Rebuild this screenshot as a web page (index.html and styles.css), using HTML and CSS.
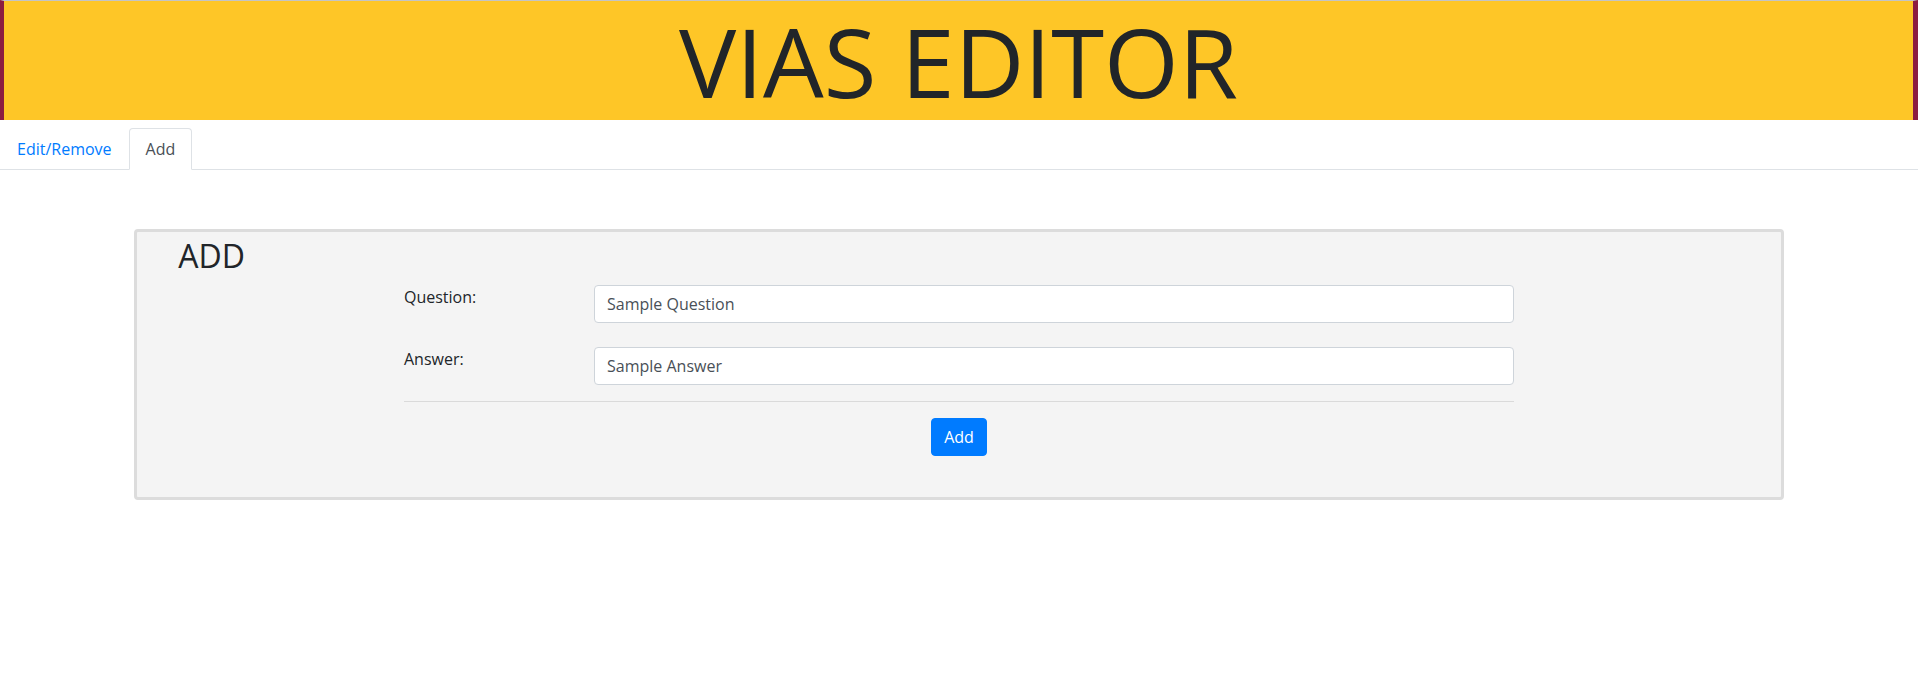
FILE: index.html
```html
<!DOCTYPE html>
<html lang="en">
<head>
<meta charset="utf-8">
<title>VIAS Editor</title>
<link rel="stylesheet" href="styles.css">
</head>
<body>
<header class="banner">
  <h1 class="banner-title">VIAS EDITOR</h1>
</header>
<nav class="tabs">
  <a class="tab" href="#">Edit/Remove</a>
  <a class="tab tab-active" href="#">Add</a>
</nav>
<main class="panel">
  <h2 class="panel-title">ADD</h2>
  <form class="form-wrap">
    <div class="fields">
      <div class="field">
        <label class="field-label">Question:</label>
        <div class="field-control"><input class="input" type="text" value="Sample Question"></div>
      </div>
      <div class="field">
        <label class="field-label">Answer:</label>
        <div class="field-control"><input class="input" type="text" value="Sample Answer"></div>
      </div>
    </div>
    <hr class="divider">
    <div class="actions">
      <button class="btn" type="button">Add</button>
    </div>
  </form>
</main>
</body>
</html>
```
FILE: styles.css
```css
* { box-sizing: border-box; }

body {
  margin: 0;
  font-family: "Open Sans", "Noto Sans", sans-serif;
  font-size: 16px;
  line-height: 1.5;
  color: #212529;
  background: #fff;
}

.banner {
  height: 120px;
  background: #fec627;
  border-top: 1px solid #c4c4c4;
  border-left: 4px solid #8c1d40;
  border-right: 5px solid #8c1d40;
  display: flex;
  justify-content: center;
}

.banner-title {
  margin: 2px 0 0;
  font-size: 96px;
  font-weight: 400;
  line-height: 1.2;
  color: #212529;
}

.tabs {
  margin-top: 8px;
  display: flex;
  border-bottom: 1px solid #dee2e6;
}

.tab {
  display: block;
  padding: 8px 16px;
  line-height: 24px;
  border: 1px solid transparent;
  border-top-left-radius: 4px;
  border-top-right-radius: 4px;
  margin-bottom: -1px;
  color: #007bff;
  text-decoration: none;
}

.tab-active {
  color: #495057;
  background: #fff;
  border-color: #dee2e6 #dee2e6 #fff;
}

.panel {
  margin: 59px 7% 0;
  background: #f4f4f4;
  border: 3px solid #dcdcdc;
  border-radius: 4px;
  padding: 5px 0 41px;
}

.panel-title {
  margin: 0 0 10px 41px;
  font-size: 32px;
  font-weight: 400;
  line-height: 1.2;
  color: #212529;
}

.form-wrap {
  max-width: 1140px;
  margin: 0 auto;
  padding: 0 15px;
}

.fields {
  display: flex;
  flex-direction: column;
  gap: 24px;
}

.field {
  display: flex;
  margin: 0 -15px;
}

.field-label {
  flex: 0 0 16.6667%;
  padding: 0 15px;
  line-height: 24px;
}

.field-control {
  flex: 0 0 83.3333%;
  padding: 0 15px;
}

.input {
  display: block;
  width: 100%;
  height: 38px;
  padding: 6px 12px;
  font-family: inherit;
  font-size: 16px;
  line-height: 24px;
  color: #495057;
  background: #fff;
  border: 1px solid #ced4da;
  border-radius: 4px;
}

.divider {
  margin: 16px 0;
  border: 0;
  border-top: 1px solid #dadada;
}

.actions {
  display: flex;
  justify-content: center;
}

.btn {
  height: 38px;
  padding: 6px 12px;
  font-family: inherit;
  font-size: 16px;
  line-height: 24px;
  color: #fff;
  background: #007bff;
  border: 1px solid #007bff;
  border-radius: 4px;
}
```
